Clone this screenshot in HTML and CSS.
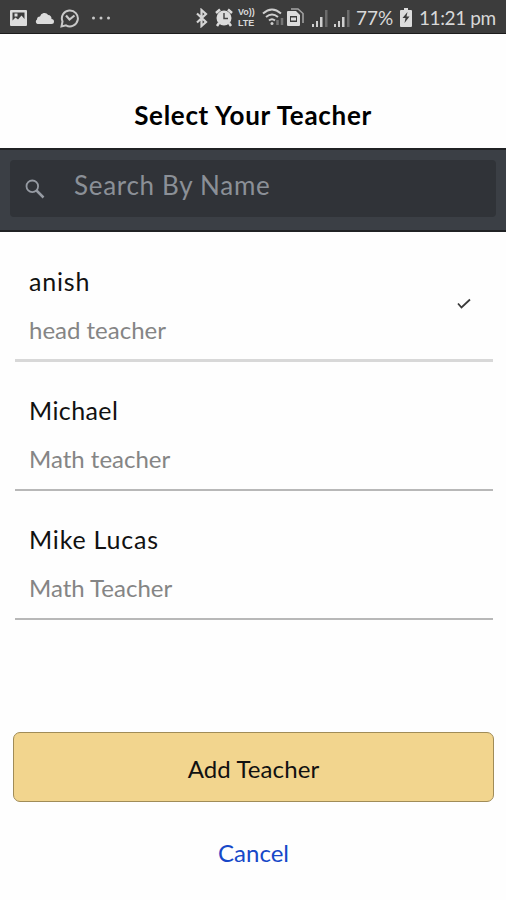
FILE: index.html
```html
<!DOCTYPE html>
<html lang="en">
<head>
    <meta charset="UTF-8">
    <meta name="viewport" content="width=device-width, initial-scale=1.0">
    <title>Select Your Teacher</title>
    <link rel="stylesheet" href="styles.css">
</head>
<body>
    <div class="status-bar">
        <div class="status-left">
            <svg class="icon-picture" width="18" height="16" viewBox="0 0 18 16"><path fill="#dcdcdc" fill-rule="evenodd" d="M1 0h15q1 0 1 1v14q0 1-1 1H1q-1 0-1-1V1q0-1 1-1zM2.500 2.500v8l3-3 2.500 2 3.500-4 3 3.500v-6.500zM4.500 3.500h3v3h-3z"/></svg>
            <svg class="icon-cloud" width="19" height="12" viewBox="0 0 19 12"><path fill="#dcdcdc" d="M2.500 12a2.500 2.500 0 0 1-.5-4.500 3 3 0 0 1 3-3A4.500 4.500 0 0 1 13.200 3 3.500 3.500 0 0 1 16.500 7 2.500 2.500 0 0 1 16.500 12z"/></svg>
            <svg class="icon-chat" width="20" height="20" viewBox="0 0 20 20" fill="none" stroke="#c8c8c8"><path stroke-width="2" d="M1.500 18.500l1-5A8 8 0 1 1 6 17.400z"/><path stroke-width="2.200" d="M6 7.500l3.500 4 5-4"/></svg>
            <svg width="18" height="4" viewBox="0 0 18 4" fill="#c8c8c8"><circle cx="1.500" cy="2" r="1.500"/><circle cx="9" cy="2" r="1.500"/><circle cx="16.500" cy="2" r="1.500"/></svg>
        </div>
        <div class="status-right">
            <svg class="icon-bluetooth" width="12" height="20" viewBox="0 0 12 20" fill="none" stroke="#d4d4d4" stroke-width="2.200"><path d="M1 5.500l9 8.500-4.500 4V2L10 6l-9 8.500"/></svg>
            <svg class="icon-alarm" width="18" height="19" viewBox="0 0 18 19"><g stroke="#dcdcdc" stroke-width="2.500"><path d="M1 5l4-3.500M17 5l-4-3.500M4 15l-2 3M14 15l2 3"/></g><circle cx="9" cy="10" r="7.500" fill="#dcdcdc"/><path d="M9 5v5.500h4" fill="none" stroke="#454545" stroke-width="1.500"/></svg>
            <div class="volte"><span>Vo))</span><span>LTE</span></div>
            <svg class="icon-wifi" width="22" height="19" viewBox="0 0 22 19" fill="none" stroke="#cfcfcf" stroke-width="2"><path d="M1 5.500q9-8 18 0M4 9q6-5 12 0M7 12.500q3-2.500 6 0"/><circle cx="10" cy="15.500" r="1.500" fill="#cfcfcf" stroke="none"/><path stroke="#737373" stroke-width="2.500" d="M15.500 12v5M20 10v7"/></svg>
            <svg class="icon-sim" width="17" height="19" viewBox="0 0 17 19"><path fill="none" stroke="#a5a5a5" stroke-width="1.500" d="M4 1h7l5 4.500V15"/><path fill="#dcdcdc" fill-rule="evenodd" d="M1 3h8l4 4v10q0 1-1 1H1q-1 0-1-1V4q0-1 1-1zM3 8v6h7V8zM4 9.500h5v3H4z"/></svg>
            <svg class="icon-signal" width="16" height="18" viewBox="0 0 16 18"><path fill="#cfcfcf" d="M0 15h2v3H0zM4 12h2v6H4zM8 8h2.500v10H8z"/><path fill="#6b6b6b" d="M13 1h2.500v17H13z"/></svg>
            <svg class="icon-signal" width="16" height="18" viewBox="0 0 16 18"><path fill="#cfcfcf" d="M0 15h2v3H0zM4 12h2v6H4zM8 8h2.500v10H8z"/><path fill="#6b6b6b" d="M13 1h2.500v17H13z"/></svg>
            <span class="percent">77%</span>
            <svg class="icon-battery" width="12" height="19" viewBox="0 0 12 19"><path fill="#dcdcdc" d="M4 0h4v2h3q1 0 1 1v15q0 1-1 1H1q-1 0-1-1V3q0-1 1-1h3z"/><path fill="#3c3c3c" d="M7.500 4L2.500 10h3l-1 5 5-6.500h-3z"/></svg>
            <span class="time">11:21 pm</span>
        </div>
    </div>

    <h1 class="title">Select Your Teacher</h1>

    <div class="search-bar">
        <div class="search-box">
            <svg width="20" height="20" viewBox="0 0 20 20" fill="none" stroke="#969ba3"><circle cx="7.300" cy="7.300" r="5.800" stroke-width="1.800"/><path stroke-width="2.500" d="M11.500 11.500l7 7"/></svg>
            <span class="placeholder">Search By Name</span>
        </div>
    </div>

    <div class="teacher-list">
        <div class="teacher selected">
            <div>
                <div class="name">anish</div>
                <div class="role">head teacher</div>
            </div>
            <svg class="check" width="14" height="12" viewBox="0 0 14 12" fill="none" stroke="#3a3a3a" stroke-width="1.800"><path d="M1 5.500l3.500 4L13 1.500"/></svg>
        </div>
        <div class="teacher">
            <div>
                <div class="name michael">Michael</div>
                <div class="role">Math teacher</div>
            </div>
        </div>
        <div class="teacher">
            <div>
                <div class="name">Mike Lucas</div>
                <div class="role">Math Teacher</div>
            </div>
        </div>
    </div>

    <div class="actions">
        <a class="add-button">Add Teacher</a>
        <a class="cancel">Cancel</a>
    </div>
</body>
</html>
```

FILE: styles.css
```css
* {
    box-sizing: border-box;
}

body {
    margin: 0;
    height: 900px;
    background-color: #fefefe;
    color: #111;
    font-family: "Choco Cooky", Lato, sans-serif;
    font-size: 24px;
    white-space: nowrap;
    overflow: hidden;
}

svg {
    display: block;
    flex: none;
}

.status-bar {
    display: flex;
    justify-content: space-between;
    height: 34px;
    padding: 0 10px;
    background-color: #3c3c3c;
    border-bottom: 1px solid #1c1c1c;
    color: #d8d8d8;
}

.status-left,
.status-right {
    display: flex;
    align-items: center;
    height: 35px;
}

.icon-cloud {
    margin: 0 6px 0 7px;
}

.icon-chat {
    margin-right: 12px;
}

.icon-alarm {
    margin: 0 5px 0 7px;
}

.volte {
    display: flex;
    flex-direction: column;
    width: 18px;
    margin-right: 6px;
    font-family: "Liberation Sans", sans-serif;
    font-size: 9px;
    line-height: 11px;
    font-weight: bold;
}

.icon-sim {
    margin: 0 8px 0 3px;
}

.icon-signal {
    margin-right: 6px;
}

.percent {
    width: 38px;
    margin-right: 6px;
    font-size: 19px;
}

.time {
    width: 77px;
    margin-left: 7px;
    font-size: 19px;
    letter-spacing: -0.4px;
}

.title {
    display: flex;
    justify-content: center;
    align-items: center;
    height: 114px;
    margin: 0;
    padding-top: 48px;
    font-size: 26px;
    font-weight: bold;
    letter-spacing: 0.7px;
    color: #000;
}

.search-bar {
    height: 84px;
    padding: 10px 10px 0;
    background-color: #3b3f45;
    border-top: 2px solid #202224;
    border-bottom: 2px solid #202224;
}

.search-box {
    display: flex;
    align-items: center;
    height: 57px;
    padding-left: 15px;
    background-color: #303338;
    border-radius: 4px;
}

.placeholder {
    margin-left: 29px;
    padding-bottom: 8px;
    font-size: 26px;
    letter-spacing: 0.7px;
    color: #8b9097;
}

.teacher-list {
    padding: 0 13px 0 15px;
}

.teacher {
    display: flex;
    justify-content: space-between;
    height: 129px;
    padding: 28px 22px 0 14px;
    border-bottom: 2px solid #b8b8b8;
}

.teacher.selected {
    height: 130px;
    padding-top: 29px;
    border-bottom: 3px solid #d8d8d8;
}

.name {
    height: 40px;
    line-height: 40px;
    font-size: 25px;
    letter-spacing: 0.8px;
    color: #111;
}

.name.michael {
    letter-spacing: 0.4px;
}

.role {
    height: 40px;
    margin-top: 9px;
    line-height: 40px;
    color: #858585;
}

.check {
    margin-top: 37px;
}

.actions {
    padding: 112px 12px 0 13px;
}

.add-button {
    display: flex;
    justify-content: center;
    align-items: center;
    height: 70px;
    padding-top: 2px;
    background-color: #f2d58e;
    border: 1px solid #a08c58;
    border-radius: 7px;
    letter-spacing: 0.1px;
}

.cancel {
    display: flex;
    justify-content: center;
    align-items: center;
    height: 100px;
    color: #1748c8;
}
```
